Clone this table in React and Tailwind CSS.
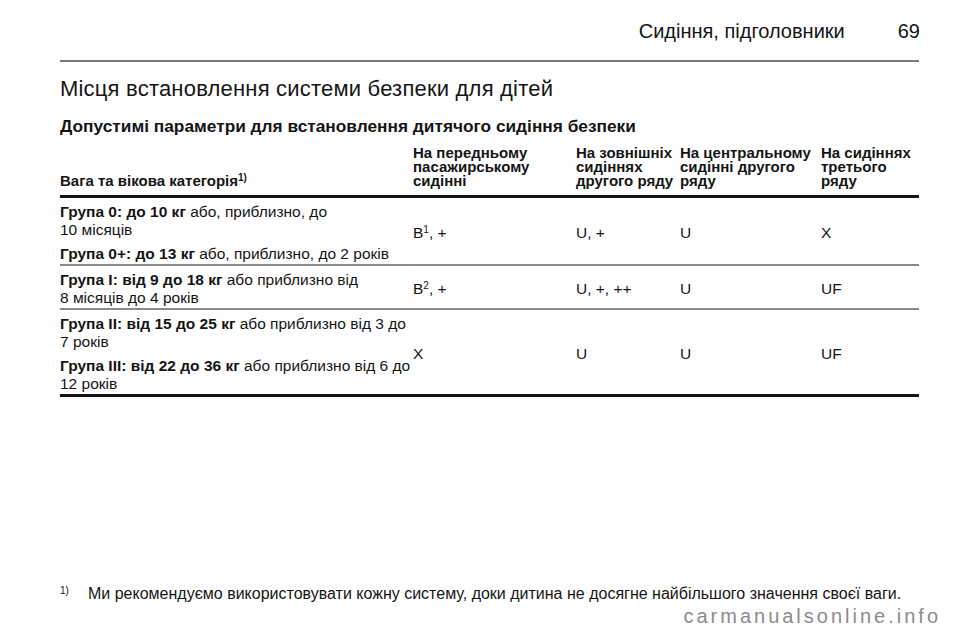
import React from 'react';

// Дані таблиці: ліва колонка (абзаци) + значення для місць
const rows = [
    {
        groups: [
            { bold: 'Група 0: до 10 кг', lines: [' або, приблизно, до', '10 місяців'] },
            { bold: 'Група 0+: до 13 кг', lines: [' або, приблизно, до 2 років'] },
        ],
        cells: [['B', '1', ', +'], ['U, +'], ['U'], ['X']],
    },
    {
        groups: [
            { bold: 'Група I: від 9 до 18 кг', lines: [' або приблизно від', '8 місяців до 4 років'] },
        ],
        cells: [['B', '2', ', +'], ['U, +, ++'], ['U'], ['UF']],
    },
    {
        groups: [
            { bold: 'Група II: від 15 до 25 кг', lines: [' або приблизно від 3 до', '7 років'] },
            { bold: 'Група III: від 22 до 36 кг', lines: [' або приблизно від 6 до', '12 років'] },
        ],
        cells: [['X'], ['U'], ['U'], ['UF']],
    },
];

const headers = [
    ['На передньому', 'пасажирському', 'сидінні'],
    ['На зовнішніх', 'сидіннях', 'другого ряду'],
    ['На центральному', 'сидінні другого', 'ряду'],
    ['На сидіннях', 'третього', 'ряду'],
];

// Клітинка зі значенням (можливий верхній індекс)
const Value = ({ parts }) => (
    <div className="flex items-center whitespace-nowrap">
        <span>
            {parts[0]}
            {parts[1] && <sup className="text-[10px]">{parts[1]}</sup>}
            {parts[2]}
        </span>
    </div>
);

export default function App() {
    return (
        <div className="w-[960px] h-[642px] bg-white text-[#151515] font-['Liberation_Sans',Arial,sans-serif] flex flex-col overflow-hidden">
            {/* Верхній колонтитул */}
            <header className="flex justify-end items-baseline pt-[21px] pr-[40px] gap-[53px] text-[20px] leading-none">
                <span>Сидіння, підголовники</span>
                <span>69</span>
            </header>
            <div className="ml-[60px] mr-[41px] mt-[19px] h-[2px] bg-[#7a7a7a]" />

            <h1 className="ml-[60px] mt-[16px] text-[22px] leading-none tracking-[0.2px]">
                Місця встановлення системи безпеки для дітей
            </h1>
            <h2 className="ml-[60px] mt-[18px] text-[17.3px] leading-none font-bold">
                Допустимі параметри для встановлення дитячого сидіння безпеки
            </h2>

            {/* Таблиця */}
            <div className="ml-[60px] mr-[41px] mt-[11px]">
                <div className="grid grid-cols-[353px_163px_104px_141px_98px] items-end text-[15px] font-bold leading-[14px] pb-[7px] border-b-[3px] border-[#151515]">
                    <div className="whitespace-nowrap">
                        Вага та вікова категорія<sup className="text-[10px]">1)</sup>
                    </div>
                    {headers.map((h, i) => (
                        <div key={i} className="whitespace-nowrap">
                            {h.map((line, j) => (
                                <div key={j}>{line}</div>
                            ))}
                        </div>
                    ))}
                </div>

                {rows.map((row, i) => (
                    <div
                        key={i}
                        className={
                            'grid grid-cols-[353px_163px_104px_141px_98px] text-[15.5px] leading-[18px] pt-[5px] pb-[1px] ' +
                            (i === rows.length - 1 ? 'border-b-[3px] border-[#151515]' : 'border-b-2 border-[#8a8a8a]')
                        }
                    >
                        <div className="flex flex-col gap-[6px]">
                            {row.groups.map((g, j) => (
                                <p key={j} className="whitespace-nowrap">
                                    <span className="font-bold">{g.bold}</span>
                                    {g.lines[0]}
                                    {g.lines[1] && (
                                        <>
                                            <br />
                                            {g.lines[1]}
                                        </>
                                    )}
                                </p>
                            ))}
                        </div>
                        {row.cells.map((c, j) => (
                            <Value key={j} parts={c} />
                        ))}
                    </div>
                ))}
            </div>

            <div className="flex-1" />

            {/* Примітка */}
            <div className="flex items-baseline ml-[60px] text-[16px] leading-none">
                <sup className="w-[28px] text-[10px]">1)</sup>
                <span>Ми рекомендуємо використовувати кожну систему, доки дитина не досягне найбільшого значення своєї ваги.</span>
            </div>
            <div className="flex justify-end pr-[19px] mt-[4px] mb-[16px] text-[20px] leading-none tracking-[3px] text-[#8c8c8c]">
                carmanualsonline.info
            </div>
        </div>
    );
}
